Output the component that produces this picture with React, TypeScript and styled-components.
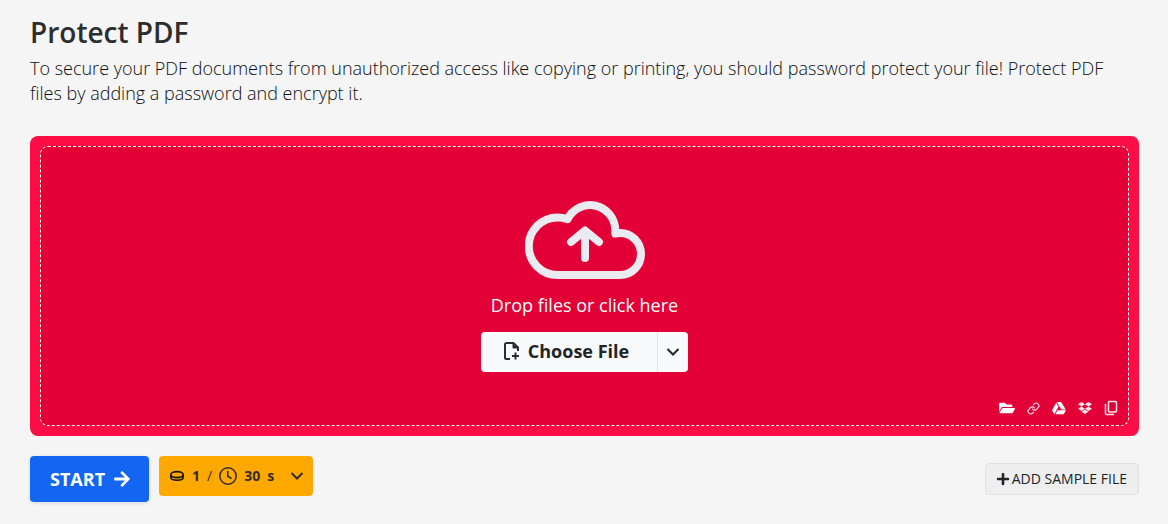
import React from 'react';
import styled, { createGlobalStyle } from 'styled-components';
import { FaArrowRight, FaDropbox, FaFolderOpen, FaGoogleDrive, FaPlus } from 'react-icons/fa';
import { FiLink } from 'react-icons/fi';

const GlobalStyle = createGlobalStyle`
  *, *::before, *::after { box-sizing: border-box; }
  body {
    margin: 0;
    background: #f5f5f5;
    color: #212529;
    font-family: 'Open Sans', 'Noto Sans', sans-serif;
  }
  button { font-family: inherit; color: inherit; cursor: pointer; }
  svg { display: block; flex: none; }
`;

const Page = styled.main`
  padding: 15px 29px 22px 30px;
`;

const Title = styled.h1`
  margin: 0 0 7px;
  font-size: 28px;
  line-height: 34px;
  font-weight: 600;
  color: #2d2d2d;
`;

const Lead = styled.p`
  margin: 0 0 30px;
  font-size: 18px;
  line-height: 25px;
  font-weight: 300;
  color: #0c0e10;
`;

const DropFrame = styled.section`
  padding: 10px;
  border-radius: 8px;
  background: #ff0d45;
`;

const DropArea = styled.div`
  display: flex;
  flex-direction: column;
  align-items: center;
  min-height: 280px;
  padding: 54px 9px 9px;
  border: 1px dashed #fff;
  border-radius: 8px;
  background: #e30036;
`;

const DropLabel = styled.p`
  margin: 14px 0;
  font-size: 18px;
  line-height: 25px;
  font-weight: 400;
  color: #fff;
`;

const SplitButton = styled.div`
  display: flex;
  height: 40px;
  border-radius: 4px;
  overflow: hidden;
  background: #f8f9fa;
`;

const ChooseButton = styled.button`
  display: flex;
  align-items: center;
  gap: 7px;
  padding: 0 28px 2px 20px;
  border: 0;
  background: transparent;
  font-size: 18px;
  line-height: 24px;
  font-weight: 700;
`;

const MenuButton = styled.button`
  display: flex;
  align-items: center;
  justify-content: center;
  width: 31px;
  padding: 0;
  border: 0;
  border-left: 1px solid #dfe2e6;
  background: transparent;
`;

const Sources = styled.div`
  display: flex;
  align-self: flex-end;
  gap: 10px;
  margin-top: auto;
`;

const SourceButton = styled.button<{ $soft?: boolean }>`
  display: flex;
  align-items: center;
  justify-content: center;
  width: 16px;
  height: 16px;
  padding: 0;
  border: 0;
  background: transparent;
  && { color: ${(p) => (p.$soft ? '#fbe4ea' : '#fff')}; }
`;

const Actions = styled.div`
  display: flex;
  align-items: flex-start;
  gap: 10px;
  margin-top: 20px;
`;

const StartButton = styled.button`
  display: flex;
  align-items: center;
  gap: 8px;
  height: 46px;
  padding: 0 18px 0 20px;
  border: 0;
  border-radius: 4px;
  background: #1266f1;
  box-shadow: 0 1px 4px rgba(0, 0, 0, 0.12);
  font-size: 18px;
  line-height: 24px;
  font-weight: 700;
  && { color: #fff; }
`;

const CostButton = styled.button`
  display: flex;
  align-items: center;
  gap: 7px;
  height: 40px;
  padding: 0 9px 0 10px;
  border: 0;
  border-radius: 4px;
  background: #ffa900;
  font-size: 14px;
  line-height: 20px;
  && { color: #332d2d; }

  svg:last-child { margin-left: 9px; }
`;

const SampleButton = styled.button`
  display: flex;
  align-items: center;
  gap: 2px;
  height: 32px;
  margin: 7px 0 0 auto;
  padding: 0 11px 0 10px;
  border: 1px solid #dee2e6;
  border-radius: 4px;
  background: #eee;
  font-size: 14px;
  line-height: 20px;
`;

const CloudUpload = () => (
  <svg width="120" height="78" viewBox="0 0 120 78" fill="none" stroke="#e9ebf0" strokeWidth="8" strokeLinecap="round" strokeLinejoin="round" aria-hidden="true">
    <path d="M32.500 74H95A21 21 0 0 0 95 32Q92.500 32 90.300 32.500V29A25.200 25.200 0 0 0 42.500 18.200Q38 16.500 32.500 16.500A28.750 28.750 0 0 0 32.500 74Z" />
    <path d="M60 57V31M46 41L60 29.500L74 41" />
  </svg>
);

const FileAdd = () => (
  <svg width="20" height="20" viewBox="0 0 20 20" fill="none" stroke="#2b2d30" strokeWidth="2" aria-hidden="true">
    <path d="M9 18H5.500A1.500 1.500 0 0 1 4 16.500V3.500A1.500 1.500 0 0 1 5.500 2H12.500L17 6.500V10" />
    <path d="M12 2V7H17Z" fill="#2b2d30" strokeWidth="1" />
    <path d="M14.500 11.500V18.500M11 15H18" />
  </svg>
);

const Chevron = () => (
  <svg width="14" height="14" viewBox="0 0 14 14" fill="none" stroke="currentColor" strokeWidth="2" aria-hidden="true">
    <path d="M1.500 4L7 9.500L12.500 4" />
  </svg>
);

const Coin = () => (
  <svg width="16" height="16" viewBox="0 0 16 16" fill="none" stroke="#17130a" strokeWidth="1.600" aria-hidden="true">
    <ellipse cx="8" cy="6.600" rx="6.200" ry="3" />
    <path d="M1.800 6.600V9.200C1.800 11.200 4.600 12.200 8 12.200S14.200 11.200 14.200 9.200V6.600" />
  </svg>
);

const Clock = () => (
  <svg width="18" height="18" viewBox="0 0 18 18" fill="none" stroke="currentColor" strokeWidth="1.600" strokeLinecap="round" aria-hidden="true">
    <circle cx="9" cy="9" r="8.200" />
    <path d="M8.800 4.300V9.300L12 11.300" />
  </svg>
);

const Copy = () => (
  <svg width="14" height="16" viewBox="0 0 14 16" fill="none" stroke="currentColor" strokeWidth="1.500" aria-hidden="true">
    <rect x="4.500" y="1.500" width="8" height="10.500" rx="1" />
    <path d="M1.500 4V13.500Q1.500 14.500 2.500 14.500H10" />
  </svg>
);

export default function App() {
  return (
    <>
      <GlobalStyle />
      <Page>
        <Title>Protect PDF</Title>
        <Lead>
          To secure your PDF documents from unauthorized access like copying or printing, you should password
          protect your file! Protect PDF files by adding a password and encrypt it.
        </Lead>
        <DropFrame>
          <DropArea>
            <CloudUpload />
            <DropLabel>Drop files or click here</DropLabel>
            <SplitButton>
              <ChooseButton type="button">
                <FileAdd />
                Choose File
              </ChooseButton>
              <MenuButton type="button" aria-label="More sources">
                <Chevron />
              </MenuButton>
            </SplitButton>
            <Sources>
              <SourceButton type="button" aria-label="Browse"><FaFolderOpen size={16} /></SourceButton>
              <SourceButton type="button" aria-label="From URL" $soft><FiLink size={13} /></SourceButton>
              <SourceButton type="button" aria-label="Google Drive"><FaGoogleDrive size={14} /></SourceButton>
              <SourceButton type="button" aria-label="Dropbox" $soft><FaDropbox size={14} /></SourceButton>
              <SourceButton type="button" aria-label="Paste" $soft><Copy /></SourceButton>
            </Sources>
          </DropArea>
        </DropFrame>
        <Actions>
          <StartButton type="button">
            START
            <FaArrowRight size={18} />
          </StartButton>
          <CostButton type="button" aria-label="Cost details">
            <Coin />
            <b>1</b>
            <span>/</span>
            <Clock />
            <b>30</b>
            <b>s</b>
            <Chevron />
          </CostButton>
          <SampleButton type="button">
            <FaPlus size={14} />
            ADD SAMPLE FILE
          </SampleButton>
        </Actions>
      </Page>
    </>
  );
}
